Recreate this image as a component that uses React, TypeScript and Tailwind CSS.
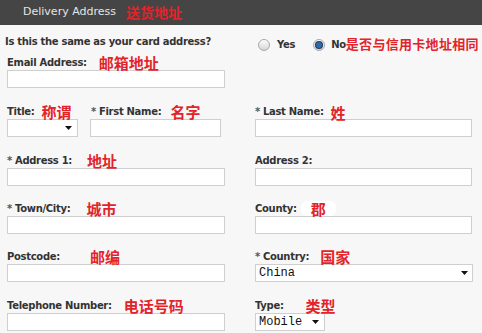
import React from 'react'

const label = 'font-["DejaVu_Sans",sans-serif] font-bold text-[10px] tracking-[-0.3px] text-[#333] leading-[14px] whitespace-nowrap'
const note = 'font-["Noto_Sans_CJK_SC",sans-serif] font-bold text-[15px] text-[#e3232a] leading-[15px] whitespace-nowrap'
const box = 'h-[18px] bg-white border border-[#cfcfcf]'

function Arrow() {
  return (
    <svg width="7" height="4" viewBox="0 0 7 4" className="shrink-0">
      <path d="M0 0h7L3.5 4z" fill="#111" />
    </svg>
  )
}

function Star() {
  return <span className="text-[#555] mr-[3px]">*</span>
}

function Label({ text, req, tip, gap }: { text: string; req?: boolean; tip?: string; gap: string }) {
  return (
    <div className="flex items-end h-[14px]">
      <span className={label}>
        {req && <Star />}
        {text}
      </span>
      {tip && <span className={`${note} ${gap}`}>{tip}</span>}
    </div>
  )
}

function Radio({ on }: { on?: boolean }) {
  return (
    <span className="w-[12px] h-[12px] rounded-full border border-[#a9a9a9] bg-gradient-to-b from-[#fdfdfd] to-[#d6d6d6] flex items-center justify-center">
      {on && <span className="w-[6px] h-[6px] rounded-full bg-[#2f6aa8] ring-1 ring-[#1d3c5e]" />}
    </span>
  )
}

export default function App() {
  return (
    <div className="w-[482px] h-[333px] bg-[#f7f7f7] overflow-hidden">
      {/* header */}
      <div className="h-[25px] bg-[#454545] flex items-center pl-[23px]">
        <span className="font-['DejaVu_Sans',sans-serif] text-[11px] text-[#e4e4e4]">Delivery Address</span>
        <span className="font-['Noto_Sans_CJK_SC',sans-serif] font-bold text-[14px] text-[#e3232a] leading-[15px] ml-[10px]">送货地址</span>
      </div>

      {/* same address question */}
      <div className="flex items-center h-[14px] mt-[10px] pl-[5px]">
        <span className={`${label} w-[253px]`}>Is this the same as your card address?</span>
        <div className="flex items-center mt-[5px]">
          <Radio />
          <span className={`${label} ml-[7px]`}>Yes</span>
          <span className="ml-[18px]"><Radio on /></span>
          <span className={`${label} ml-[6px]`}>No</span>
          <span className="font-['Noto_Sans_CJK_SC',sans-serif] font-bold text-[13px] tracking-[0.3px] text-[#e3232a] leading-[15px] whitespace-nowrap -mt-[2px]">是否与信用卡地址相同</span>
        </div>
      </div>

      <div className="pl-[7px]">
        {/* email */}
        <div className="mt-[7px]">
          <Label text="Email Address:" tip="邮箱地址" gap="ml-[12px]" />
          <div className={`${box} w-[218px]`} />
        </div>

        {/* title / names */}
        <div className="flex mt-[17px]">
          <div className="w-[248px] flex">
            <div className="w-[83px]">
              <Label text="Title:" tip="称谓" gap="ml-[7px]" />
              <div className={`${box} w-[71px] flex items-center justify-end pr-[5px]`}>
                <Arrow />
              </div>
            </div>
            <div>
              <div className="pl-[1px]">
                <Label text="First Name:" req tip="名字" gap="ml-[9px]" />
              </div>
              <div className={`${box} w-[131px]`} />
            </div>
          </div>
          <div>
            <Label text="Last Name:" req tip="姓" gap="ml-[7px] -mb-[1px]" />
            <div className={`${box} w-[217px]`} />
          </div>
        </div>

        {/* address lines */}
        <div className="flex mt-[17px]">
          <div className="w-[248px]">
            <Label text="Address 1:" req tip="地址" gap="ml-[15px]" />
            <div className={`${box} w-[218px]`} />
          </div>
          <div>
            <Label text="Address 2:" gap="" />
            <div className={`${box} w-[217px]`} />
          </div>
        </div>

        {/* town / county */}
        <div className="flex mt-[16px]">
          <div className="w-[248px]">
            <Label text="Town/City:" req tip="城市" gap="ml-[16px]" />
            <div className={`${box} w-[218px]`} />
          </div>
          <div>
            <Label text="County:" tip="郡" gap="ml-[4px] bg-white px-[10px] rounded-[6px]" />
            <div className={`${box} w-[217px]`} />
          </div>
        </div>

        {/* postcode / country */}
        <div className="flex mt-[16px]">
          <div className="w-[248px]">
            <Label text="Postcode:" tip="邮编" gap="ml-[30px]" />
            <div className={`${box} w-[218px]`} />
          </div>
          <div>
            <Label text="Country:" req tip="国家" gap="ml-[11px]" />
            <div className={`${box} w-[218px] flex items-center justify-between pl-[3px] pr-[4px]`}>
              <span className="font-['Liberation_Mono',monospace] text-[12px] text-[#111] leading-none">China</span>
              <Arrow />
            </div>
          </div>
        </div>

        {/* phone / type */}
        <div className="flex mt-[17px]">
          <div className="w-[248px]">
            <Label text="Telephone Number:" tip="电话号码" gap="ml-[12px]" />
            <div className={`${box} w-[218px]`} />
          </div>
          <div>
            <Label text="Type:" tip="类型" gap="ml-[22px]" />
            <div className={`${box} w-[70px] flex items-center justify-between pl-[3px] pr-[5px]`}>
              <span className="font-['Liberation_Mono',monospace] text-[12px] text-[#111] leading-none">Mobile</span>
              <Arrow />
            </div>
          </div>
        </div>
      </div>
    </div>
  )
}
